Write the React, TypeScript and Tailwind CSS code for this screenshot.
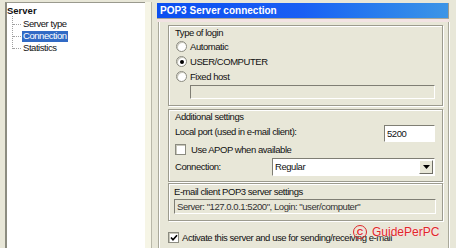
import React from "react";

const font = { fontFamily: '"Liberation Sans", Arial, sans-serif' };

function Radio({ checked, label }: { checked?: boolean; label: string }) {
  return (
    <div className="flex items-center h-[15px] pl-[2px]">
      <div className="w-[11px] h-[11px] rounded-full border border-[#8b8b80] bg-white flex items-center justify-center shadow-[inset_1px_1px_0_#c9c8bc]">
        {checked && <div className="w-[4px] h-[4px] rounded-full bg-black" />}
      </div>
      <span className="ml-[3px]">{label}</span>
    </div>
  );
}

function Check({ checked }: { checked?: boolean }) {
  return (
    <div className="w-[11px] h-[11px] border border-[#8b8b80] bg-white flex items-center justify-center shadow-[inset_1px_1px_0_#c9c8bc]">
      {checked && (
        <svg width="8" height="8" viewBox="0 0 8 8">
          <path d="M1 3.5 L3 5.8 L7 1.2" stroke="#000" strokeWidth="1.6" fill="none" />
        </svg>
      )}
    </div>
  );
}

function Group({ className, children }: { className?: string; children: React.ReactNode }) {
  return (
    <div
      className={
        "box-border border border-[#9c9b8e] shadow-[inset_1px_1px_0_#fff,1px_1px_0_#fff] pl-[5px] pr-[7px] " +
        (className ?? "")
      }
    >
      {children}
    </div>
  );
}

function Field({ className, children }: { className?: string; children?: React.ReactNode }) {
  return (
    <div
      className={
        "box-border border border-t-[#7f7e74] border-l-[#7f7e74] border-r-[#fff] border-b-[#fff] flex items-center " +
        (className ?? "")
      }
    >
      {children}
    </div>
  );
}

export default function App() {
  return (
    <div
      className="w-[456px] h-[248px] flex bg-[#e8e7d8] text-[9.5px] tracking-[-0.45px] text-[#111] overflow-hidden leading-none"
      style={font}
    >
      {/* tree */}
      <div className="w-[152px] h-full pl-[5px] pt-[2px] flex">
        <div className="flex-1 bg-white border-l-2 border-t border-l-[#8c8c80] border-t-[#9a9a8e] pt-[3px] relative">
          <div className="font-bold text-[9.5px] tracking-normal h-[10px] flex items-center">Server</div>
          <div className="absolute left-[5px] top-[13px] h-[33px] border-l border-dotted border-[#a0a0a0]" />
          <div className="flex flex-col mt-[2px]">
            {["Server type", "Connection", "Statistics"].map((t) => (
              <div key={t} className="flex items-center h-[12px] relative">
                <div className="w-[8px] ml-[6px] border-t border-dotted border-[#a0a0a0]" />
                <span
                  className={
                    "ml-[1px] px-[1px] h-[11px] flex items-center " +
                    (t === "Connection" ? "bg-[#316ac5] text-white" : "")
                  }
                >
                  {t}
                </span>
              </div>
            ))}
          </div>
        </div>
        <div className="w-[7px] h-full bg-[#f6f5e6] border-r border-[#b8b7a8]" />
      </div>

      {/* right panel */}
      <div className="flex-1 flex flex-col pl-[5px] pr-[7px] pt-[3px] relative">
        <div className="h-[15px] bg-gradient-to-r from-[#0c4ff0] via-[#1a5ff4] to-[#3d95e6] text-white font-bold text-[10px] tracking-normal flex items-center pl-[3px] border-r border-[#9c9b8e]">
          POP3 Server connection
        </div>
        <div className="h-[4px] bg-[#f2e3e3] border-t border-[#a9a89a]" />

        <div className="flex-1 flex flex-col ml-[1px] pl-[9px] pr-[5px] border-l border-r border-l-[#a9a89a] border-r-[#a9a89a] shadow-[inset_1px_0_0_#fff,1px_0_0_#fff]">
          <Group className="h-[81px] mt-[3px] pt-[2px]">
            <div className="h-[10px] flex items-center ml-[1px]">Type of login</div>
            <div className="flex flex-col mt-[1px]">
              <Radio label="Automatic" />
              <Radio checked label="USER/COMPUTER" />
              <Radio label="Fixed host" />
            </div>
            <Field className="ml-[16px] mt-[1px] h-[14px] bg-[#e8e7d8]" />
          </Group>

          <Group className="h-[73px] mt-[3px] pt-[2px]">
            <div className="h-[10px] flex items-center ml-[1px]">Additional settings</div>
            <div className="flex items-center justify-between mt-[3px] h-[17px]">
              <span className="ml-[1px] mb-[3px]">Local port (used in e-mail client):</span>
              <Field className="w-[51px] h-[17px] bg-white pl-[2px]">5200</Field>
            </div>
            <div className="flex items-center mt-[1px] h-[13px] pl-[1px]">
              <Check />
              <span className="ml-[5px]">Use APOP when available</span>
            </div>
            <div className="flex items-center mt-[2px]">
              <span className="w-[97px] ml-[1px]">Connection:</span>
              <Field className="flex-1 h-[18px] bg-white pl-[2px] justify-between">
                <span>Regular</span>
                <div className="w-[14px] h-[14px] mr-[1px] bg-[#e8e7d8] border border-t-white border-l-white border-r-[#6f6e66] border-b-[#6f6e66] flex items-center justify-center">
                  <svg width="7" height="4" viewBox="0 0 7 4">
                    <path d="M0 0 H7 L3.5 4 Z" fill="#000" />
                  </svg>
                </div>
              </Field>
            </div>
          </Group>

          <Group className="h-[38px] mt-[1px] pt-[3px]">
            <div className="h-[10px] flex items-center">E-mail client POP3 server settings</div>
            <Field className="mt-[2px] h-[15px] bg-[#e8e7d8] pl-[2px] text-[#333] -mr-[1px]">
              Server: "127.0.0.1:5200", Login: "user/computer"
            </Field>
          </Group>

          <div className="flex items-center mt-[10px] h-[13px] whitespace-nowrap">
            <Check checked />
            <span className="ml-[3px]">Activate this server and use for sending/receiving e-mail</span>
          </div>
        </div>

        {/* watermark */}
        <div className="absolute left-[201px] top-[225px] text-[12px] tracking-normal text-[#e0262a] flex items-center [text-shadow:0_0_2px_#fff,0_0_3px_#ffc0c0]">
          <span className="w-[14px] h-[14px] rounded-full border-[1.5px] border-[#e0262a] flex items-center justify-center text-[9px] font-bold">
            C
          </span>
          <span className="ml-[5px]">GuidePerPC</span>
        </div>
      </div>
    </div>
  );
}
